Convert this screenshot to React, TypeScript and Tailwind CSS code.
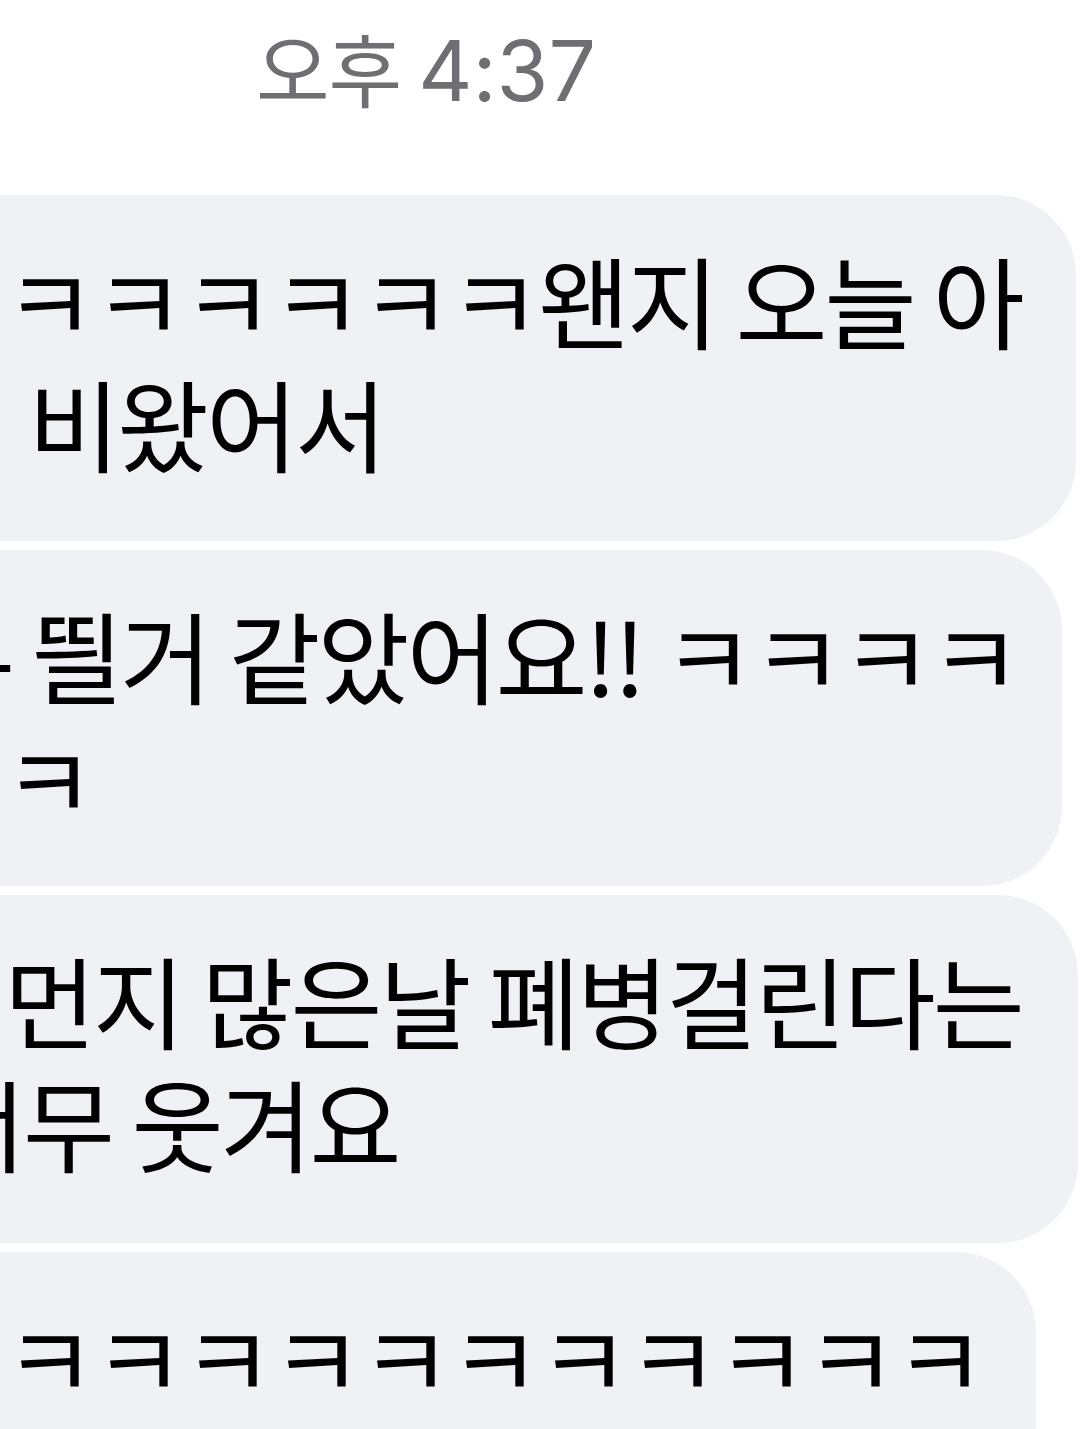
import React from "react";

const KR = { fontFamily: '"Noto Sans CJK KR", "Noto Sans", sans-serif' };

function Line({ ml, children }: { ml: string; children: React.ReactNode }) {
  return <div className={`whitespace-nowrap ${ml}`}>{children}</div>;
}

export default function App() {
  return (
    <div
      className="w-[1080px] h-[1429px] bg-white overflow-hidden text-black"
      style={KR}
    >
      <div className="h-[195px] pt-[16px] pl-[256px] text-[#6e6e73] text-[80px] leading-[100px] tracking-[-1px]">
        <span style={{ fontFamily: '"Noto Sans CJK KR", sans-serif' }}>오후</span>{" "}
        <span
          className="text-[84px] tracking-[0px]"
          style={{ fontFamily: 'Inter, "Noto Sans CJK KR", sans-serif' }}
        >
          4:37
        </span>
      </div>

      <div className="flex flex-col gap-[9px] text-[100px] leading-[123px] tracking-[-3px]">
        <div className="-ml-[40px] w-[1116px] h-[346px] bg-[#eff1f5] rounded-r-[80px] pt-[42px]">
          <Line ml="ml-[44px]">ㅋㅋㅋㅋㅋㅋ왠지 오늘 아</Line>
          <Line ml="ml-[68px]">비왔어서</Line>
        </div>
        <div className="-ml-[40px] w-[1102px] h-[336px] bg-[#eff1f5] rounded-r-[80px] pt-[42px]">
          <Line ml="ml-[20px]">
            <span>-</span> 띌거 같았어요!! ㅋㅋㅋㅋ
          </Line>
          <Line ml="ml-[43px]">ㅋ</Line>
        </div>
        <div className="-ml-[40px] w-[1118px] h-[348px] bg-[#eff1f5] rounded-r-[80px] pt-[42px]">
          <Line ml="ml-[44px]">먼지 많은날 폐병걸린다는</Line>
          <Line ml="-ml-[26px]">너무 웃겨요</Line>
        </div>
        <div className="-ml-[40px] w-[1076px] h-[300px] bg-[#eff1f5] rounded-r-[80px] pt-[42px]">
          <Line ml="ml-[44px]">ㅋㅋㅋㅋㅋㅋㅋㅋㅋㅋㅋ</Line>
        </div>
      </div>
    </div>
  );
}
